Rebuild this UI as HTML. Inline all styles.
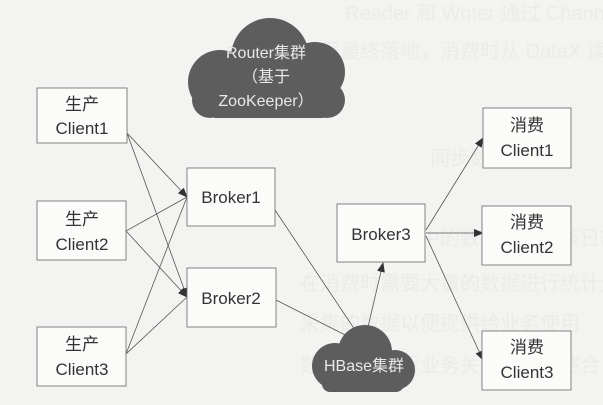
<!DOCTYPE html>
<html><head><meta charset="utf-8"><style>
html,body{margin:0;padding:0;background:#f3f3f1;}
svg{display:block;}
text{font-family:"Liberation Sans","Noto Sans CJK SC",sans-serif;}
</style></head><body>
<svg width="603" height="405" viewBox="0 0 603 405" xmlns="http://www.w3.org/2000/svg">
<defs>
<marker id="a" markerWidth="10" markerHeight="8" refX="9" refY="4" orient="auto" markerUnits="userSpaceOnUse"><path d="M0,0 L10,4 L0,8 Z" fill="#333"/></marker>
<marker id="s" markerWidth="10" markerHeight="8" refX="1" refY="4" orient="auto" markerUnits="userSpaceOnUse"><path d="M10,0 L0,4 L10,8 Z" fill="#333"/></marker>
</defs>
<rect width="603" height="405" fill="#f3f3f1"/>
<g fill="#ebebe9" font-size="20" font-family="Liberation Serif,Noto Serif CJK SC,serif">
<text x="345" y="20">Reader 和 Writer 通过 Channel 交换数据</text>
<text x="300" y="58">数据最终落地，消费时从 DataX 读入目</text>
<text x="430" y="165">同步数据的步</text>
<text x="420" y="245">中的数据，由于该日志</text>
<text x="300" y="290">在消费时需要大量的数据进行统计分析</text>
<text x="300" y="330">采集的数据以便提供给业务使用</text>
<text x="300" y="372">数据需要进行业务关联后进行整合</text>
</g>
<g stroke="#555" stroke-width="0.8" fill="none">
<line x1="127" y1="133" x2="187" y2="197" marker-end="url(#a)"/>
<line x1="127" y1="133" x2="187" y2="297" marker-end="url(#a)"/>
<line x1="126" y1="231" x2="187" y2="197"/>
<line x1="126" y1="231" x2="187" y2="297" marker-end="url(#a)"/>
<line x1="126" y1="354" x2="187" y2="197"/>
<line x1="126" y1="354" x2="187" y2="297"/>
<line x1="275" y1="210" x2="365" y2="345" marker-end="url(#a)"/>
<line x1="276" y1="300" x2="365" y2="345" marker-end="url(#a)"/>
<line x1="364" y1="344" x2="383" y2="263" marker-start="url(#s)" marker-end="url(#a)"/>
<line x1="426" y1="230" x2="483" y2="138" marker-end="url(#a)"/>
<line x1="426" y1="233" x2="483" y2="233" marker-end="url(#a)"/>
<line x1="426" y1="236" x2="483" y2="360" marker-end="url(#a)"/>
</g>
<g fill="#fbfbf9" stroke="#777" stroke-width="0.9">
<rect x="37" y="88" width="90" height="55"/>
<rect x="37" y="201" width="89" height="59"/>
<rect x="37" y="327" width="89" height="59"/>
<rect x="187" y="168" width="88" height="58"/>
<rect x="187" y="268" width="89" height="59"/>
<rect x="337" y="204" width="88" height="58"/>
<rect x="483" y="108" width="88" height="60"/>
<rect x="482" y="206" width="89" height="59"/>
<rect x="482" y="331" width="89" height="59"/>
</g>
<g fill="#333" font-size="17" text-anchor="middle">
<text x="82" y="110">生产</text><text x="82" y="134">Client1</text>
<text x="82" y="225">生产</text><text x="82" y="250">Client2</text>
<text x="82" y="350">生产</text><text x="82" y="375">Client3</text>
<text x="231" y="203">Broker1</text>
<text x="231" y="304">Broker2</text>
<text x="381" y="240">Broker3</text>
<text x="527" y="131">消费</text><text x="527" y="156">Client1</text>
<text x="527" y="228">消费</text><text x="527" y="253">Client2</text>
<text x="527" y="353">消费</text><text x="527" y="378">Client3</text>
</g>
<g fill="#5d5d5d">
<circle cx="220" cy="82" r="32"/>
<circle cx="270" cy="57" r="39"/>
<circle cx="315" cy="72" r="30"/>
<circle cx="210" cy="100" r="18"/>
<circle cx="327" cy="100" r="18"/>
<rect x="208" y="70" width="122" height="48" rx="8"/>
<circle cx="335" cy="366" r="23"/>
<circle cx="365" cy="352" r="27"/>
<circle cx="395" cy="370" r="20"/>
<rect x="322" y="360" width="82" height="32" rx="8"/>
</g>
<g fill="#e8e8e8" font-size="16" text-anchor="middle">
<text x="266" y="58">Router集群</text>
<text x="266" y="82">（基于</text>
<text x="266" y="106">ZooKeeper）</text>
<text x="364" y="371">HBase集群</text>
</g>
</svg>
</body></html>
